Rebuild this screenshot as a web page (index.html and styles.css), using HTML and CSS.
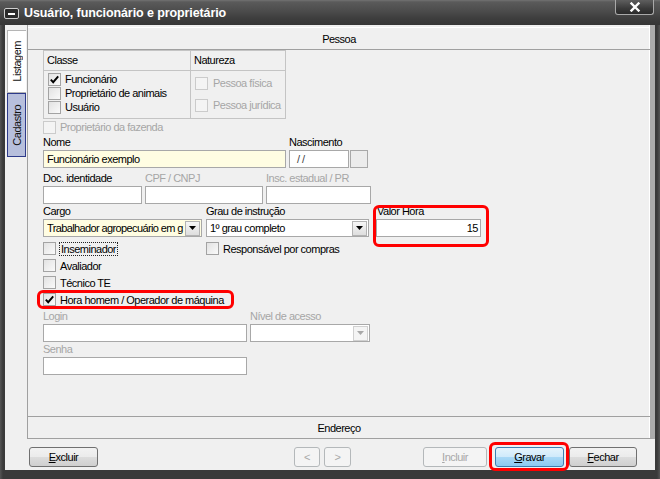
FILE: index.html
```html
<!DOCTYPE html>
<html lang="pt-BR">
<head>
<meta charset="utf-8">
<title>Usuário, funcionário e proprietário</title>
<link rel="stylesheet" href="styles.css">
</head>
<body>
<div class="window">
  <div class="titlebar">
    <span class="sysicon"><span class="sysdash"></span></span>
    <span class="title">Usuário, funcionário e proprietário</span>
    <span class="close"><svg width="14" height="10" viewBox="0 0 14 10"><path d="M3.5 1.5 L10.5 8.5 M10.5 1.5 L3.5 8.5" stroke="#fff" stroke-width="2.4" stroke-linecap="square"/></svg></span>
  </div>
  <div class="client">
    <div class="main">
      <div class="tabs">
        <div class="tab tab-list"><span class="tab-text">Listagem</span></div>
        <div class="tab tab-cad"><span class="tab-text">Cadastro</span></div>
      </div>
      <div class="panel">
        <div class="bar bar-top">Pessoa</div>
        <div class="content">
          <div class="group">
            <div class="ghead ghead-l">Classe</div>
            <div class="ghead">Natureza</div>
            <div class="gbody gbody-l">
              <div class="chk row14"><span class="cb"><svg width="11" height="11" viewBox="0 0 11 11"><path d="M1.8 5.6 L4.2 8.2 L9.2 2.4" fill="none" stroke="#000" stroke-width="1.9"/></svg></span>Funcionário</div>
              <div class="chk row14"><span class="cb"></span>Proprietário de animais</div>
              <div class="chk row14"><span class="cb"></span>Usuário</div>
            </div>
            <div class="gbody gbody-r">
              <div class="chk row22 dis"><span class="cb cb-dis"></span>Pessoa física</div>
              <div class="chk row22 dis"><span class="cb cb-dis"></span>Pessoa jurídica</div>
            </div>
          </div>
          <div class="chk dis fazenda"><span class="cb cb-dis"></span>Proprietário da fazenda</div>

          <div class="frow r1">
            <div class="field w-nome"><div class="lbl">Nome</div><div class="inp yellow">Funcionário exemplo</div></div>
            <div class="field f-nasc"><div class="lbl">Nascimento</div>
              <div class="date"><div class="inp w-nasc"><span class="slash">/ /</span></div><div class="datebtn"></div></div>
            </div>
          </div>

          <div class="frow r2">
            <div class="field w-doc"><div class="lbl">Doc. identidade</div><div class="inp"></div></div>
            <div class="field w-cpf"><div class="lbl dis">CPF / CNPJ</div><div class="inp"></div></div>
            <div class="field w-insc"><div class="lbl dis">Insc. estadual / PR</div><div class="inp"></div></div>
          </div>

          <div class="frow r3">
            <div class="field w-cargo combo"><div class="lbl">Cargo</div>
              <div class="inp yellow"><span class="ddtext cargo-text">Trabalhador agropecuário em g</span><span class="ddbtn"><svg width="7" height="4" viewBox="0 0 7 4"><path d="M0 0 H7 L3.5 4 Z" fill="#000"/></svg></span></div>
            </div>
            <div class="field w-grau combo"><div class="lbl">Grau de instrução</div>
              <div class="inp"><span class="ddtext">1º grau completo</span><span class="ddbtn"><svg width="7" height="4" viewBox="0 0 7 4"><path d="M0 0 H7 L3.5 4 Z" fill="#000"/></svg></span></div>
            </div>
            <div class="field w-valor hl-valor"><div class="lbl lbl-valor">Valor Hora</div><div class="inp num">15</div></div>
          </div>

          <div class="cbrow first">
            <div class="chk w-col1"><span class="cb"></span><span class="focus">Inseminador</span></div>
            <div class="chk"><span class="cb"></span>Responsável por compras</div>
          </div>
          <div class="cbrow"><div class="chk"><span class="cb"></span>Avaliador</div></div>
          <div class="cbrow"><div class="chk"><span class="cb"></span>Técnico TE</div></div>
          <div class="cbrow"><div class="chk hl-hora"><span class="cb"><svg width="11" height="11" viewBox="0 0 11 11"><path d="M1.8 5.6 L4.2 8.2 L9.2 2.4" fill="none" stroke="#000" stroke-width="1.9"/></svg></span>Hora homem / Operador de máquina</div></div>

          <div class="frow r4">
            <div class="field w-login"><div class="lbl dis">Login</div><div class="inp"></div></div>
            <div class="field w-nivel combo"><div class="lbl dis">Nível de acesso</div>
              <div class="inp"><span class="ddtext"></span><span class="ddbtn ddbtn-dis"><svg width="7" height="4" viewBox="0 0 7 4"><path d="M0 0 H7 L3.5 4 Z" fill="#a8a8a8"/></svg></span></div>
            </div>
          </div>
          <div class="frow r5">
            <div class="field w-login"><div class="lbl dis">Senha</div><div class="inp"></div></div>
          </div>
        </div>
        <div class="bar bar-bottom">Endereço</div>
      </div>
    </div>
    <div class="btnbar">
      <div class="btn b-excluir"><span><u>E</u>xcluir</span></div>
      <div class="btn btn-dis b-prev">&lt;</div>
      <div class="btn btn-dis b-next">&gt;</div>
      <div class="btn btn-dis b-incluir"><span><u>I</u>ncluir</span></div>
      <div class="btn btn-blue b-gravar"><span><u>G</u>ravar</span></div>
      <div class="btn b-fechar"><span><u>F</u>echar</span></div>
    </div>
  </div>
</div>
</body>
</html>
```

FILE: styles.css
```css
* { box-sizing: border-box; }
html, body { margin: 0; padding: 0; }
body {
  width: 660px;
  height: 479px;
  overflow: hidden;
  background: #2f2f2f;
  font-family: "Liberation Sans", Arial, sans-serif;
  font-size: 11px;
  letter-spacing: -0.5px;
  color: #000;
}
.window {
  width: 660px;
  height: 479px;
  display: flex;
  flex-direction: column;
  background: linear-gradient(90deg, #555 0, #3a3a3a 3px, #3a3a3a 657px, #555 660px);
}
.titlebar {
  height: 25px;
  display: flex;
  align-items: center;
  background: linear-gradient(#727272 0, #5a5a5a 2px, #4c4c4c 11px, #3e3e3e 18px, #363636 25px);
}
.sysicon {
  margin-left: 4px;
  margin-top: 2px;
  width: 15px;
  height: 11px;
  border: 1px solid #cfcfcf;
  border-radius: 2px;
  background: #2b2b2b;
  display: flex;
  align-items: center;
  justify-content: center;
}
.sysdash { width: 7px; height: 2px; background: #fff; }
.title {
  margin-left: 5px;
  margin-top: 1px;
  color: #fff;
  font-weight: bold;
  font-size: 12.5px;
  letter-spacing: -0.1px;
}
.close {
  margin-left: auto;
  margin-right: 6px;
  align-self: flex-start;
  width: 39px;
  height: 15px;
  border: 1px solid #a9a9a9;
  border-top: none;
  border-radius: 0 0 3px 3px;
  background: linear-gradient(#5e5e5e, #3a3a3a 60%, #2a2a2a);
  display: flex;
  align-items: center;
  justify-content: center;
}
.client {
  flex: 1;
  margin: 0 5px 9px 5px;
  background: #f0f0f0;
  display: flex;
  flex-direction: column;
}
.main { height: 414px; display: flex; }
.tabs {
  width: 22px;
  padding: 5px 0 0 2px;
  display: flex;
  flex-direction: column;
}
.tab {
  width: 19px;
  display: flex;
  align-items: center;
  justify-content: center;
}
.tab-list {
  height: 63px;
  background: #fff;
  border: 1px solid #b5b5b5;
  border-right: none;
}
.tab-cad {
  height: 64px;
  background: #b7bfdc;
  border: 1px solid #2d3a8a;
}
.tab-text {
  writing-mode: vertical-rl;
  transform: rotate(180deg);
  color: #111;
}
.panel {
  flex: 1;
  display: flex;
  flex-direction: column;
  border-left: 1px solid #a0a0a0;
  border-right: 5px solid #acacac;
  border-bottom: 1px solid #a0a0a0;
  box-shadow: inset -1px 0 0 #fff;
}
.bar {
  display: flex;
  align-items: center;
  justify-content: center;
}
.bar-top {
  margin-top: 2px;
  height: 23px;
  border-top: 1px solid #fff;
  border-bottom: 1px solid #a0a0a0;
}
.bar-bottom {
  height: 22px;
  border-top: 1px solid #a0a0a0;
}
.content {
  flex: 1;
  padding-left: 15px;
  display: flex;
  flex-direction: column;
}
.group {
  display: grid;
  grid-template-columns: 147px 94px;
  grid-template-rows: 20px 1fr;
  width: 243px;
  height: 69px;
  border: 1px solid #c4c4c4;
}
.ghead {
  padding-left: 3px;
  line-height: 19px;
  border-bottom: 1px solid #c4c4c4;
}
.ghead-l, .gbody-l { border-right: 1px solid #c4c4c4; }
.gbody { padding: 1px 0 0 4px; }
.chk { display: flex; align-items: center; gap: 4px; white-space: nowrap; }
.row14 { height: 14px; }
.row22 { height: 22px; gap: 5px; }
.dis { color: #a6a6a6; }
.cb {
  width: 13px;
  height: 13px;
  flex: none;
  border: 1px solid #a3a3a3;
  background: linear-gradient(135deg, #e2e2e2, #fafafa);
  display: flex;
  align-items: center;
  justify-content: center;
}
.cb-dis { border-color: #cbcbcb; background: #f4f4f4; }
.fazenda { height: 14px; margin-top: 1px; }
.frow { display: flex; }
.field { display: flex; flex-direction: column; }
.lbl { height: 14px; line-height: 14px; white-space: nowrap; }
.inp {
  height: 18px;
  margin-top: 1px;
  border: 1px solid #a8a8a8;
  background: #fff;
  padding: 0 3px;
  line-height: 16px;
  white-space: nowrap;
  overflow: hidden;
}
.yellow { background: #fffde2; }
.r1 { margin-top: 1px; }
.w-nome { width: 243px; }
.f-nasc { margin-left: 3px; }
.date { display: flex; }
.w-nasc { width: 60px; padding-left: 7px; }
.slash { color: #444; }
.datebtn {
  width: 18px;
  height: 18px;
  margin: 1px 0 0 1px;
  border: 1px solid #a8a8a8;
  background: #ececec;
}
.r2 { margin-top: 3px; }
.w-doc { width: 99px; }
.w-cpf { width: 118px; margin-left: 3px; }
.w-insc { width: 105px; margin-left: 3px; }
.r3 { margin-top: 0; }
.w-cargo { width: 159px; }
.w-grau { width: 163px; margin-left: 4px; }
.w-valor { width: 105px; margin-left: 7px; }
.lbl-valor { padding-left: 1px; }
.combo .inp {
  display: flex;
  align-items: center;
  padding: 0 1px 0 3px;
}
.ddtext { flex: 1; overflow: hidden; white-space: nowrap; }
.cargo-text { letter-spacing: -0.62px; }
.ddbtn {
  width: 15px;
  height: 15px;
  flex: none;
  border: 1px solid #b3b3b3;
  background: linear-gradient(#f6f6f6, #dedede);
  display: flex;
  align-items: center;
  justify-content: center;
}
.ddbtn-dis { border-color: #d0d0d0; background: #f4f4f4; }
.num { text-align: right; padding-right: 2px; }
.hl-valor { position: relative; }
.hl-valor::after {
  content: "";
  position: absolute;
  top: 1px;
  left: -3px;
  right: -8px;
  bottom: -10px;
  border: 3px solid #f00;
  border-radius: 6px;
}
.cbrow { height: 17px; display: flex; align-items: center; }
.cbrow.first { margin-top: 3px; }
.w-col1 { width: 163px; }
.focus {
  border: 1px dotted #222;
  margin-left: -1px;
  padding: 0 1px 0 1px;
  line-height: 12px;
}
.hl-hora { position: relative; }
.hl-hora::after {
  content: "";
  position: absolute;
  top: -3px;
  left: -6px;
  right: -10px;
  bottom: -3px;
  border: 3px solid #f00;
  border-radius: 6px;
}
.r4 { margin-top: 1px; }
.w-login { width: 204px; }
.w-nivel { width: 120px; margin-left: 3px; }
.btnbar {
  flex: 1;
  display: flex;
  align-items: flex-start;
  padding-top: 8px;
}
.btn {
  height: 20px;
  border: 1px solid #707070;
  border-radius: 3px;
  background: linear-gradient(#f2f2f2 0%, #ebebeb 50%, #dddddd 50%, #cfcfcf 100%);
  display: flex;
  align-items: center;
  justify-content: center;
  position: relative;
}
.btn-dis {
  border-color: #b4b8ba;
  background: #f4f4f4;
  color: #a8a8a8;
}
.btn-blue {
  border-color: #3c7fb1;
  background: linear-gradient(#e5f4fc 0%, #cfeafb 50%, #aad9f6 50%, #8ccbf1 100%);
}
.b-excluir { width: 69px; margin-left: 24px; }
.b-prev { width: 26px; margin-left: 196px; }
.b-next { width: 27px; margin-left: 4px; }
.b-incluir { width: 64px; margin-left: 72px; }
.b-gravar { width: 69px; margin-left: 8px; }
.b-fechar { width: 68px; margin-left: 5px; }
.b-gravar::after {
  content: "";
  position: absolute;
  top: -6px;
  left: -7px;
  right: -6px;
  bottom: -5px;
  border: 3px solid #f00;
  border-radius: 6px;
}
```
